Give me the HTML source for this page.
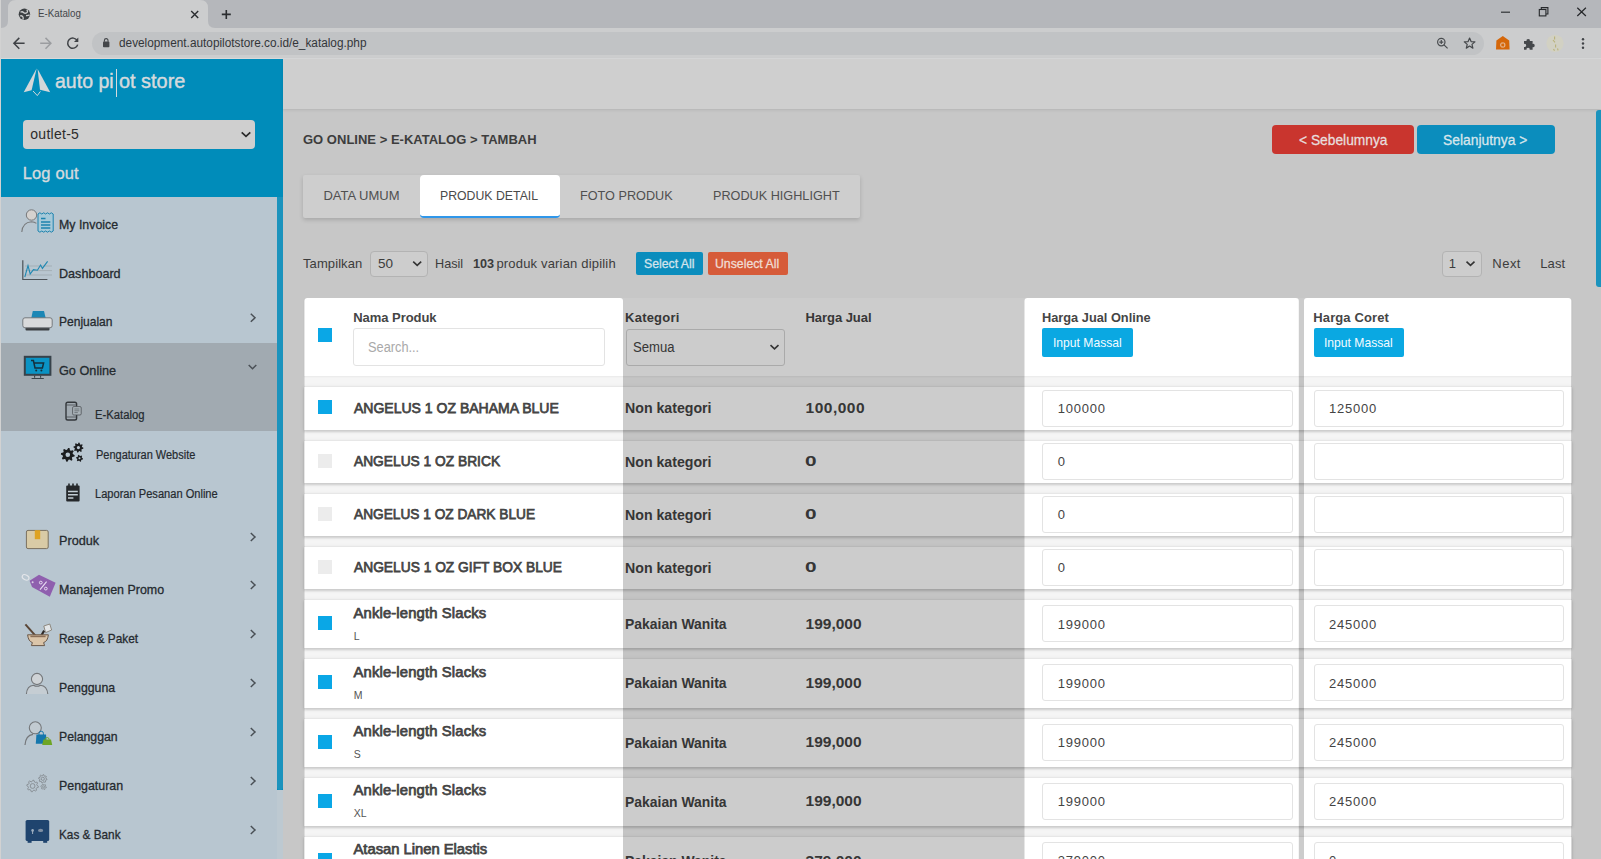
<!DOCTYPE html>
<html lang="id">
<head>
<meta charset="utf-8">
<title>E-Katalog</title>
<style>
*{box-sizing:border-box;margin:0;padding:0}
html,body{width:1601px;height:859px;overflow:hidden}
body{position:relative;background:#c7c7c7;font-family:"Liberation Sans",sans-serif;color:#333}
.abs{position:absolute}
.t{position:absolute;white-space:nowrap;line-height:1;transform-origin:0 50%}
svg{position:absolute;overflow:visible}
.row{position:absolute;left:304px;width:1268px;background:#fff;border-top:1px solid #e7e7e7;box-shadow:0 2px 2px rgba(0,0,0,.12),0 1px 4px rgba(0,0,0,.09)}
.inp{position:absolute;background:#fff;border:1px solid #e3e3e3;border-radius:3px}
.cb{position:absolute;width:14px;height:14px}
</style>
</head>
<body>
<div class="abs" style="left:0px;top:0px;width:1601px;height:28px;background:#b5b7bb;"></div>
<svg style="left:0;top:0" width="230" height="28" viewBox="0 0 230 28"><path d="M1 28 Q8 28 8 21 V8 Q8 0 16 0 H200 Q208 0 208 8 V21 Q208 28 215 28 Z" fill="#cccdce"/></svg>
<div class="abs" style="left:0px;top:28px;width:1601px;height:30px;background:#cccdce;"></div>
<div class="abs" style="left:0px;top:58px;width:1601px;height:1px;background:#d8d9da;"></div>
<div class="abs" style="left:92px;top:32px;width:1392px;height:23px;background:#c1c3c5;border-radius:12px;"></div>
<div class="t" style="left:37.5px;top:7.8px;font-size:11.5px;color:#43464a;transform:scaleX(0.849);">E-Katalog</div>
<div class="t" style="left:118.9px;top:37.1px;font-size:12px;color:#33363a;transform:scaleX(0.984);">development.autopilotstore.co.id/e_katalog.php</div>
<div class="abs" style="left:1px;top:59px;width:282px;height:800px;background:#008cba;"></div>
<div class="abs" style="left:1px;top:197px;width:276px;height:662px;background:#b8c6d0;"></div>
<div class="abs" style="left:1px;top:343px;width:276px;height:88px;background:#a1aab1;"></div>
<div class="abs" style="left:277px;top:790px;width:6px;height:69px;background:#bdc9d1;"></div>
<div class="abs" style="left:277px;top:197px;width:6px;height:593px;background:#1b93bd;border-radius:0 0 3px 3px;"></div>
<div class="abs" style="left:23px;top:120px;width:232px;height:29px;background:#cfcfcf;border-radius:4px;"></div>
<div class="t" style="left:54.8px;top:70.4px;font-size:21px;color:#d5dadd;transform:scaleX(0.930);-webkit-text-stroke:0.45px #d5dadd;">auto pi</div>
<div class="abs" style="left:115.7px;top:68.6px;width:1.7px;height:28.6px;background:#d5dadd;"></div>
<div class="t" style="left:119.4px;top:70.4px;font-size:21px;color:#d5dadd;transform:scaleX(0.947);-webkit-text-stroke:0.45px #d5dadd;">ot store</div>
<div class="t" style="left:30.3px;top:126.5px;font-size:14px;color:#2c2c2c;letter-spacing:0.27px;">outlet-5</div>
<div class="t" style="left:22.7px;top:164.9px;font-size:16.5px;color:#d5dadd;letter-spacing:0.16px;-webkit-text-stroke:0.35px #d5dadd;">Log out</div>
<div class="t" style="left:59.4px;top:218.0px;font-size:13px;color:#252a2f;transform:scaleX(0.951);-webkit-text-stroke:0.3px #252a2f;">My Invoice</div>
<div class="t" style="left:59.4px;top:266.5px;font-size:13px;color:#252a2f;transform:scaleX(0.969);-webkit-text-stroke:0.3px #252a2f;">Dashboard</div>
<div class="t" style="left:59.4px;top:315.2px;font-size:13px;color:#252a2f;transform:scaleX(0.925);-webkit-text-stroke:0.3px #252a2f;">Penjualan</div>
<div class="t" style="left:59.4px;top:364.2px;font-size:13px;color:#252a2f;transform:scaleX(0.976);-webkit-text-stroke:0.3px #252a2f;">Go Online</div>
<div class="t" style="left:59.4px;top:534.3px;font-size:13px;color:#252a2f;transform:scaleX(0.974);-webkit-text-stroke:0.3px #252a2f;">Produk</div>
<div class="t" style="left:59.4px;top:582.7px;font-size:13px;color:#252a2f;transform:scaleX(0.957);-webkit-text-stroke:0.3px #252a2f;">Manajemen Promo</div>
<div class="t" style="left:59.4px;top:632.3px;font-size:13px;color:#252a2f;transform:scaleX(0.912);-webkit-text-stroke:0.3px #252a2f;">Resep &amp; Paket</div>
<div class="t" style="left:59.4px;top:681.3px;font-size:13px;color:#252a2f;transform:scaleX(0.946);-webkit-text-stroke:0.3px #252a2f;">Pengguna</div>
<div class="t" style="left:59.4px;top:730.2px;font-size:13px;color:#252a2f;transform:scaleX(0.943);-webkit-text-stroke:0.3px #252a2f;">Pelanggan</div>
<div class="t" style="left:59.4px;top:779.0px;font-size:13px;color:#252a2f;transform:scaleX(0.954);-webkit-text-stroke:0.3px #252a2f;">Pengaturan</div>
<div class="t" style="left:59.4px;top:828.0px;font-size:13px;color:#252a2f;transform:scaleX(0.906);-webkit-text-stroke:0.3px #252a2f;">Kas &amp; Bank</div>
<div class="t" style="left:95.4px;top:408.5px;font-size:12px;color:#252a2f;transform:scaleX(0.940);-webkit-text-stroke:0.2px #252a2f;">E-Katalog</div>
<div class="t" style="left:95.5px;top:448.8px;font-size:12px;color:#252a2f;transform:scaleX(0.915);-webkit-text-stroke:0.2px #252a2f;">Pengaturan Website</div>
<div class="t" style="left:95.4px;top:488.1px;font-size:12px;color:#252a2f;transform:scaleX(0.924);-webkit-text-stroke:0.2px #252a2f;">Laporan Pesanan Online</div>
<div class="abs" style="left:283px;top:59px;width:1318px;height:50px;background:#cfcfcf;box-shadow:0 1px 3px rgba(0,0,0,.10);"></div>
<div class="abs" style="left:1596px;top:110px;width:5px;height:177px;background:#1b93bd;border-radius:3px 0 0 3px;"></div>
<div class="t" style="left:303.0px;top:133.0px;font-size:13px;color:#3d3d3d;font-weight:bold;letter-spacing:0.01px;">GO ONLINE &gt; E-KATALOG &gt; TAMBAH</div>
<div class="abs" style="left:303px;top:175px;width:557px;height:43px;background:#cecece;border-radius:2px;box-shadow:0 2px 4px rgba(0,0,0,.16);"></div>
<div class="abs" style="left:420px;top:175px;width:140px;height:43px;background:#fff;border-radius:4px;border-bottom:2px solid #2f97ea;"></div>
<div class="t" style="left:323.4px;top:189.0px;font-size:13px;color:#505050;letter-spacing:0.01px;">DATA UMUM</div>
<div class="t" style="left:440.4px;top:189.0px;font-size:13px;color:#4a4a4a;transform:scaleX(0.945);">PRODUK DETAIL</div>
<div class="t" style="left:579.9px;top:189.0px;font-size:13px;color:#505050;transform:scaleX(0.974);">FOTO PRODUK</div>
<div class="t" style="left:712.9px;top:189.0px;font-size:13px;color:#505050;transform:scaleX(0.974);">PRODUK HIGHLIGHT</div>
<div class="abs" style="left:1272px;top:125px;width:142px;height:29px;background:#c9352e;border-radius:4px;"></div>
<div class="abs" style="left:1417px;top:125px;width:138px;height:29px;background:#0b8dbd;border-radius:4px;"></div>
<div class="t" style="left:1298.7px;top:132.2px;font-size:15px;color:#e8dedd;transform:scaleX(0.919);-webkit-text-stroke:0.3px #e8dedd;">&lt; Sebelumnya</div>
<div class="t" style="left:1443.3px;top:132.2px;font-size:15px;color:#d8e6ec;transform:scaleX(0.923);-webkit-text-stroke:0.3px #d8e6ec;">Selanjutnya &gt;</div>
<div class="t" style="left:303.0px;top:256.8px;font-size:13px;color:#3c3c3c;letter-spacing:0.09px;">Tampilkan</div>
<div class="abs" style="left:370px;top:251px;width:58px;height:25.5px;background:#cdcdcd;border:1px solid #b3b3b3;border-radius:4px;"></div>
<div class="t" style="left:378.1px;top:256.9px;font-size:13.5px;color:#3c3c3c;">50</div>
<div class="t" style="left:435.4px;top:256.8px;font-size:13px;color:#3c3c3c;transform:scaleX(0.974);">Hasil</div>
<div class="t" style="left:473.4px;top:256.8px;font-size:13px;color:#3c3c3c;font-weight:bold;transform:scaleX(0.975);">103</div>
<div class="t" style="left:496.4px;top:256.8px;font-size:13px;color:#3c3c3c;letter-spacing:0.18px;">produk varian dipilih</div>
<div class="abs" style="left:636px;top:252px;width:67px;height:23px;background:#0b8dbd;border-radius:2px;"></div>
<div class="t" style="left:644.0px;top:257.5px;font-size:12.5px;color:#d3e4ec;transform:scaleX(0.982);-webkit-text-stroke:0.3px #d3e4ec;">Select All</div>
<div class="abs" style="left:708px;top:252px;width:80px;height:23px;background:#d65b39;border-radius:2px;"></div>
<div class="t" style="left:715.4px;top:257.5px;font-size:12.5px;color:#f0dcd4;transform:scaleX(0.982);-webkit-text-stroke:0.3px #f0dcd4;">Unselect All</div>
<div class="abs" style="left:1441.5px;top:250.5px;width:40px;height:26.5px;background:#cdcdcd;border:1px solid #b3b3b3;border-radius:4px;"></div>
<div class="t" style="left:1448.8px;top:257.3px;font-size:13px;color:#3c3c3c;">1</div>
<div class="t" style="left:1492.3px;top:257.3px;font-size:13px;color:#3c3c3c;letter-spacing:0.48px;">Next</div>
<div class="t" style="left:1540.3px;top:257.3px;font-size:13px;color:#3c3c3c;letter-spacing:0.07px;">Last</div>
<div class="abs" style="left:283px;top:288px;width:1313px;height:571px;background:#f9f9f9;"></div>
<div class="abs" style="left:304px;top:376px;width:1268px;height:483px;background:#f5f5f5;"></div>
<div class="abs" style="left:304px;top:298px;width:1268px;height:78px;background:#fff;border-radius:3px 3px 0 0;box-shadow:0 1px 2px rgba(0,0,0,.05)"></div>
<div class="abs" style="left:318px;top:327.6px;width:14px;height:14px;background:#0aa7e6;"></div>
<div class="t" style="left:353.2px;top:311.4px;font-size:13px;color:#454545;font-weight:bold;letter-spacing:-0.04px;">Nama Produk</div>
<div class="inp" style="left:353px;top:328px;width:251.5px;height:38px"></div>
<div class="t" style="left:368.4px;top:339.9px;font-size:14px;color:#a9a9a9;transform:scaleX(0.913);">Search...</div>
<div class="t" style="left:625.1px;top:311.4px;font-size:13px;color:#454545;font-weight:bold;letter-spacing:0.21px;">Kategori</div>
<div class="inp" style="left:625.5px;top:328.5px;width:159.5px;height:37px;border-color:#d5d5d5"></div>
<div class="t" style="left:632.9px;top:339.9px;font-size:14px;color:#444;transform:scaleX(0.937);">Semua</div>
<div class="t" style="left:805.4px;top:311.4px;font-size:13px;color:#454545;font-weight:bold;letter-spacing:-0.03px;">Harga Jual</div>
<div class="t" style="left:1041.9px;top:311.4px;font-size:13px;color:#454545;font-weight:bold;transform:scaleX(0.983);">Harga Jual Online</div>
<div class="abs" style="left:1042px;top:328px;width:90.5px;height:29.4px;background:#0aa8e2;border-radius:2px;"></div>
<div class="t" style="left:1052.7px;top:336.0px;font-size:13px;color:#f4fbff;transform:scaleX(0.933);">Input Massal</div>
<div class="t" style="left:1313.3px;top:311.4px;font-size:13px;color:#454545;font-weight:bold;letter-spacing:0.11px;">Harga Coret</div>
<div class="abs" style="left:1313.7px;top:328px;width:90.5px;height:29.4px;background:#0aa8e2;border-radius:2px;"></div>
<div class="t" style="left:1324.4px;top:336.0px;font-size:13px;color:#f4fbff;transform:scaleX(0.933);">Input Massal</div>
<div class="row" style="top:386.4px;height:43.2px"></div>
<div class="abs" style="left:318px;top:400.4px;width:14px;height:14px;background:#0aa7e6;"></div>
<div class="t" style="left:353.5px;top:400.5px;font-size:14.8px;color:#444;transform:scaleX(0.947);-webkit-text-stroke:0.75px #444;">ANGELUS 1 OZ BAHAMA BLUE</div>
<div class="t" style="left:625.0px;top:400.3px;font-size:15px;color:#444;font-weight:bold;transform:scaleX(0.944);">Non kategori</div>
<div class="t" style="left:805.5px;top:399.9px;font-size:15.5px;color:#444;font-weight:bold;letter-spacing:0.51px;">100,000</div>
<div class="inp" style="left:1042.3px;top:390px;width:250.5px;height:37px"></div>
<div class="inp" style="left:1313.7px;top:390px;width:250.5px;height:37px"></div>
<div class="t" style="left:1057.8px;top:401.7px;font-size:13px;color:#444;letter-spacing:0.75px;">100000</div>
<div class="t" style="left:1329.0px;top:401.7px;font-size:13px;color:#444;letter-spacing:0.75px;">125000</div>
<div class="row" style="top:439.6px;height:43.2px"></div>
<div class="abs" style="left:318px;top:453.6px;width:14px;height:14px;background:#ececec;"></div>
<div class="t" style="left:353.5px;top:453.7px;font-size:14.8px;color:#444;transform:scaleX(0.930);-webkit-text-stroke:0.75px #444;">ANGELUS 1 OZ BRICK</div>
<div class="t" style="left:625.0px;top:453.5px;font-size:15px;color:#444;font-weight:bold;transform:scaleX(0.944);">Non kategori</div>
<div class="t" style="left:805.3px;top:453.1px;font-size:15.5px;color:#444;font-weight:bold;transform:scaleX(1.342);">0</div>
<div class="inp" style="left:1042.3px;top:443px;width:250.5px;height:37px"></div>
<div class="inp" style="left:1313.7px;top:443px;width:250.5px;height:37px"></div>
<div class="t" style="left:1057.8px;top:454.9px;font-size:13px;color:#444;letter-spacing:0.75px;">0</div>
<div class="row" style="top:492.8px;height:43.2px"></div>
<div class="abs" style="left:318px;top:506.8px;width:14px;height:14px;background:#ececec;"></div>
<div class="t" style="left:353.5px;top:506.9px;font-size:14.8px;color:#444;transform:scaleX(0.925);-webkit-text-stroke:0.75px #444;">ANGELUS 1 OZ DARK BLUE</div>
<div class="t" style="left:625.0px;top:506.7px;font-size:15px;color:#444;font-weight:bold;transform:scaleX(0.944);">Non kategori</div>
<div class="t" style="left:805.3px;top:506.3px;font-size:15.5px;color:#444;font-weight:bold;transform:scaleX(1.342);">0</div>
<div class="inp" style="left:1042.3px;top:496px;width:250.5px;height:37px"></div>
<div class="inp" style="left:1313.7px;top:496px;width:250.5px;height:37px"></div>
<div class="t" style="left:1057.8px;top:508.1px;font-size:13px;color:#444;letter-spacing:0.75px;">0</div>
<div class="row" style="top:545.9px;height:43.2px"></div>
<div class="abs" style="left:318px;top:559.9px;width:14px;height:14px;background:#ececec;"></div>
<div class="t" style="left:353.5px;top:560.0px;font-size:14.8px;color:#444;transform:scaleX(0.931);-webkit-text-stroke:0.75px #444;">ANGELUS 1 OZ GIFT BOX BLUE</div>
<div class="t" style="left:625.0px;top:559.8px;font-size:15px;color:#444;font-weight:bold;transform:scaleX(0.944);">Non kategori</div>
<div class="t" style="left:805.3px;top:559.4px;font-size:15.5px;color:#444;font-weight:bold;transform:scaleX(1.342);">0</div>
<div class="inp" style="left:1042.3px;top:549px;width:250.5px;height:37px"></div>
<div class="inp" style="left:1313.7px;top:549px;width:250.5px;height:37px"></div>
<div class="t" style="left:1057.8px;top:561.2px;font-size:13px;color:#444;letter-spacing:0.75px;">0</div>
<div class="row" style="top:599.2px;height:49.2px"></div>
<div class="abs" style="left:318px;top:616.1px;width:14px;height:14px;background:#0aa7e6;"></div>
<div class="t" style="left:353.5px;top:605.6px;font-size:14.8px;color:#444;letter-spacing:0.15px;-webkit-text-stroke:0.75px #444;">Ankle-length Slacks</div>
<div class="t" style="left:353.8px;top:630.8px;font-size:10.5px;color:#555;">L</div>
<div class="t" style="left:625.0px;top:616.2px;font-size:15px;color:#444;font-weight:bold;transform:scaleX(0.928);">Pakaian Wanita</div>
<div class="t" style="left:805.5px;top:615.8px;font-size:15.5px;color:#444;font-weight:bold;letter-spacing:0.01px;">199,000</div>
<div class="inp" style="left:1042.3px;top:605px;width:250.5px;height:37px"></div>
<div class="inp" style="left:1313.7px;top:605px;width:250.5px;height:37px"></div>
<div class="t" style="left:1057.8px;top:617.5px;font-size:13px;color:#444;letter-spacing:0.75px;">199000</div>
<div class="t" style="left:1329.0px;top:617.5px;font-size:13px;color:#444;letter-spacing:0.75px;">245000</div>
<div class="row" style="top:658.4px;height:49.2px"></div>
<div class="abs" style="left:318px;top:675.3px;width:14px;height:14px;background:#0aa7e6;"></div>
<div class="t" style="left:353.5px;top:664.8px;font-size:14.8px;color:#444;letter-spacing:0.15px;-webkit-text-stroke:0.75px #444;">Ankle-length Slacks</div>
<div class="t" style="left:353.8px;top:690.0px;font-size:10.5px;color:#555;">M</div>
<div class="t" style="left:625.0px;top:675.4px;font-size:15px;color:#444;font-weight:bold;transform:scaleX(0.928);">Pakaian Wanita</div>
<div class="t" style="left:805.5px;top:675.0px;font-size:15.5px;color:#444;font-weight:bold;letter-spacing:0.01px;">199,000</div>
<div class="inp" style="left:1042.3px;top:664px;width:250.5px;height:37px"></div>
<div class="inp" style="left:1313.7px;top:664px;width:250.5px;height:37px"></div>
<div class="t" style="left:1057.8px;top:676.7px;font-size:13px;color:#444;letter-spacing:0.75px;">199000</div>
<div class="t" style="left:1329.0px;top:676.7px;font-size:13px;color:#444;letter-spacing:0.75px;">245000</div>
<div class="row" style="top:717.6px;height:49.2px"></div>
<div class="abs" style="left:318px;top:734.5px;width:14px;height:14px;background:#0aa7e6;"></div>
<div class="t" style="left:353.5px;top:724.0px;font-size:14.8px;color:#444;letter-spacing:0.15px;-webkit-text-stroke:0.75px #444;">Ankle-length Slacks</div>
<div class="t" style="left:353.8px;top:749.2px;font-size:10.5px;color:#555;">S</div>
<div class="t" style="left:625.0px;top:734.6px;font-size:15px;color:#444;font-weight:bold;transform:scaleX(0.928);">Pakaian Wanita</div>
<div class="t" style="left:805.5px;top:734.2px;font-size:15.5px;color:#444;font-weight:bold;letter-spacing:0.01px;">199,000</div>
<div class="inp" style="left:1042.3px;top:724px;width:250.5px;height:37px"></div>
<div class="inp" style="left:1313.7px;top:724px;width:250.5px;height:37px"></div>
<div class="t" style="left:1057.8px;top:735.9px;font-size:13px;color:#444;letter-spacing:0.75px;">199000</div>
<div class="t" style="left:1329.0px;top:735.9px;font-size:13px;color:#444;letter-spacing:0.75px;">245000</div>
<div class="row" style="top:776.8px;height:49.2px"></div>
<div class="abs" style="left:318px;top:793.7px;width:14px;height:14px;background:#0aa7e6;"></div>
<div class="t" style="left:353.5px;top:783.2px;font-size:14.8px;color:#444;letter-spacing:0.15px;-webkit-text-stroke:0.75px #444;">Ankle-length Slacks</div>
<div class="t" style="left:353.8px;top:808.4px;font-size:10.5px;color:#555;">XL</div>
<div class="t" style="left:625.0px;top:793.8px;font-size:15px;color:#444;font-weight:bold;transform:scaleX(0.928);">Pakaian Wanita</div>
<div class="t" style="left:805.5px;top:793.4px;font-size:15.5px;color:#444;font-weight:bold;letter-spacing:0.01px;">199,000</div>
<div class="inp" style="left:1042.3px;top:783px;width:250.5px;height:37px"></div>
<div class="inp" style="left:1313.7px;top:783px;width:250.5px;height:37px"></div>
<div class="t" style="left:1057.8px;top:795.1px;font-size:13px;color:#444;letter-spacing:0.75px;">199000</div>
<div class="t" style="left:1329.0px;top:795.1px;font-size:13px;color:#444;letter-spacing:0.75px;">245000</div>
<div class="row" style="top:836px;height:49.2px"></div>
<div class="abs" style="left:318px;top:852.9px;width:14px;height:14px;background:#0aa7e6;"></div>
<div class="t" style="left:353.5px;top:842.4px;font-size:14.8px;color:#444;letter-spacing:-0.02px;-webkit-text-stroke:0.75px #444;">Atasan Linen Elastis</div>
<div class="t" style="left:353.8px;top:867.6px;font-size:10.5px;color:#555;">L</div>
<div class="t" style="left:625.0px;top:853.0px;font-size:15px;color:#444;font-weight:bold;transform:scaleX(0.928);">Pakaian Wanita</div>
<div class="t" style="left:805.5px;top:852.6px;font-size:15.5px;color:#444;font-weight:bold;letter-spacing:0.01px;">379,000</div>
<div class="inp" style="left:1042.3px;top:842px;width:250.5px;height:37px"></div>
<div class="inp" style="left:1313.7px;top:842px;width:250.5px;height:37px"></div>
<div class="t" style="left:1057.8px;top:854.3px;font-size:13px;color:#444;letter-spacing:0.75px;">379000</div>
<div class="t" style="left:1329.0px;top:854.3px;font-size:13px;color:#444;letter-spacing:0.75px;">0</div>
<svg style="left:0;top:0" width="1601" height="859" viewBox="0 0 1601 859"><path fill="#000" fill-opacity="0.2" fill-rule="evenodd" d="M283 288 H1596 V859 H283 Z M304.5 859 L304.5 301 Q304.5 298 307.5 298 L620 298 Q623 298 623 301 L623 859 Z M1024.5 859 L1024.5 301 Q1024.5 298 1027.5 298 L1295.8 298 Q1298.8 298 1298.8 301 L1298.8 859 Z M1304 859 L1304 301 Q1304 298 1307 298 L1568.2 298 Q1571.2 298 1571.2 301 L1571.2 859 Z"/></svg>
<svg style="left:0;top:0" width="1601" height="859" viewBox="0 0 1601 859">
<circle cx="24.4" cy="14.3" r="5.7" fill="#3c4043"/>
<path d="M20.5 12.2 q2 -1.2 3.2 .6 q1.6 1 3.3 -.3 q1.2 -1.6 -.4 -2.6 M20 16 q2 -.8 3 1 q.6 1.6 -.3 2.6 M26 15.5 q2 .2 3.6 -.6" fill="none" stroke="#cccdce" stroke-width="1.3"/>
<path d="M191.2 11 l7 7 M198.2 11 l-7 7" stroke="#2b2d30" stroke-width="1.4" fill="none"/>
<path d="M221.8 14.4 h9 M226.3 9.9 v9" stroke="#2b2d30" stroke-width="1.6" fill="none"/>
<path d="M24.6 43.3 H14 M19.3 37.9 L13.9 43.3 L19.3 48.7" stroke="#3f4246" stroke-width="1.5" fill="none"/>
<path d="M40.2 43.3 H50.8 M45.5 37.9 L50.9 43.3 L45.5 48.7" stroke="#9b9da0" stroke-width="1.5" fill="none"/>
<path d="M77.2 40.6 A5.1 5.1 0 1 0 77.7 44.6" stroke="#3f4246" stroke-width="1.5" fill="none"/>
<path d="M78.3 37.6 v4.3 h-4.3 Z" fill="#3f4246"/>
<rect x="103" y="41.6" width="6.4" height="5.6" rx=".8" fill="#44474a"/>
<path d="M104.4 41.8 v-1.4 a1.8 1.8 0 0 1 3.6 0 v1.4" stroke="#44474a" stroke-width="1.1" fill="none"/>
<circle cx="1441.3" cy="42.1" r="3.7" stroke="#4a4d50" stroke-width="1.2" fill="none"/>
<path d="M1444 44.9 l3.6 3.5 M1439.3 42.1 h4 M1441.3 40.1 v4" stroke="#4a4d50" stroke-width="1.2" fill="none"/>
<path d="M1469.60 38.00 L1471.07 41.58 L1474.93 41.87 L1471.98 44.37 L1472.89 48.13 L1469.60 46.10 L1466.31 48.13 L1467.22 44.37 L1464.27 41.87 L1468.13 41.58 Z" stroke="#45484b" stroke-width="1.2" fill="none" stroke-linejoin="round"/>
<path d="M1496.4 40.4 L1502.8 36 L1509.2 40.4 L1509.6 49.6 H1496 Z" fill="#d5670a"/>
<rect x="1500.8" y="43" width="4" height="4" rx="1" fill="none" stroke="#e8c8ae" stroke-width="1"/>
<path d="M1524 41 h2.6 a1.7 1.7 0 1 1 3.3 0 h2.7 v2.9 a1.7 1.7 0 1 1 0 3.3 v2.6 h-3 a1.6 1.6 0 1 0 -3 0 h-2.6 v-2.9 a1.6 1.6 0 1 0 0 -3 Z" fill="#45484b"/>
<circle cx="1555" cy="43.3" r="8.6" fill="#d2d1c3"/>
<path d="M1554.6 36.5 v3 M1553 40 l2 2.4 M1555.6 44.5 v3 M1553.5 49 l1 1.6 M1557.5 48.5 l.6 1.8" stroke="#b9b27a" stroke-width="1.1" fill="none"/>
<circle cx="1583" cy="39.3" r="1.2" fill="#3f4246"/>
<circle cx="1583" cy="43.5" r="1.2" fill="#3f4246"/>
<circle cx="1583" cy="47.7" r="1.2" fill="#3f4246"/>
<path d="M1501 12.2 h9" stroke="#303236" stroke-width="1.2"/>
<rect x="1539.3" y="9.5" width="6.6" height="6.4" fill="none" stroke="#26282b" stroke-width="1.1"/>
<path d="M1541.3 9.3 v-1.7 h6.6 v6.4 h-1.9" fill="none" stroke="#26282b" stroke-width="1.1"/>
<path d="M1577.3 7.8 l8.6 8.2 M1585.9 7.8 l-8.6 8.2" stroke="#26282b" stroke-width="1.2" fill="none"/>
<path d="M36.7 68.2 L23.7 92.2 L31.6 90.2 Z" fill="#d3d7d9"/>
<path d="M37.6 69 L40 89.8 L50.2 92.2 Z" fill="#d3d7d9"/>
<path d="M33 91 L37.3 95.6 L40.4 91.4" fill="none" stroke="#d3d7d9" stroke-width="1"/>
<path d="M241.7 132.3 l4.3 4 l4.3 -4" fill="none" stroke="#2a2a2a" stroke-width="1.7"/>
<path d="M413.2 261.7 l4 3.7 l4 -3.7" fill="none" stroke="#333" stroke-width="1.6"/>
<path d="M1466.5 261.7 l4 3.7 l4 -3.7" fill="none" stroke="#333" stroke-width="1.6"/>
<path d="M770.5 345.2 l4 3.7 l4 -3.7" fill="none" stroke="#333" stroke-width="1.6"/>
<path d="M250.8 313.8 l4.2 4 l-4.2 4" fill="none" stroke="#4a5056" stroke-width="1.5"/>
<path d="M250.8 533 l4.2 4 l-4.2 4" fill="none" stroke="#4a5056" stroke-width="1.5"/>
<path d="M250.8 581 l4.2 4 l-4.2 4" fill="none" stroke="#4a5056" stroke-width="1.5"/>
<path d="M250.8 630 l4.2 4 l-4.2 4" fill="none" stroke="#4a5056" stroke-width="1.5"/>
<path d="M250.8 679 l4.2 4 l-4.2 4" fill="none" stroke="#4a5056" stroke-width="1.5"/>
<path d="M250.8 728 l4.2 4 l-4.2 4" fill="none" stroke="#4a5056" stroke-width="1.5"/>
<path d="M250.8 777 l4.2 4 l-4.2 4" fill="none" stroke="#4a5056" stroke-width="1.5"/>
<path d="M250.8 826 l4.2 4 l-4.2 4" fill="none" stroke="#4a5056" stroke-width="1.5"/>
<path d="M248.7 365 l3.8 3.7 l3.8 -3.7" fill="none" stroke="#4a5056" stroke-width="1.5"/>
<circle cx="31.5" cy="215" r="5.2" fill="#d5d2cf" stroke="#77797b" stroke-width="1"/>
<path d="M21.8 232 q.8 -9.5 9.6 -10.2 q3.2 .2 5 1.6" fill="none" stroke="#77797b" stroke-width="1.1"/>
<path d="M38 214 l1.9 -1.2 l1.9 1.2 l1.9 -1.2 l1.9 1.2 l1.9 -1.2 l1.9 1.2 l1.9 -1.2 l1.9 1.2 v17 l-1.9 1.2 l-1.9 -1.2 l-1.9 1.2 l-1.9 -1.2 l-1.9 1.2 l-1.9 -1.2 l-1.9 1.2 l-1.9 -1.2 Z" fill="#a5c9d9" stroke="#1c83ae" stroke-width="1"/>
<path d="M41 218.5 h4.5 M41 222 h9.3 M41 225 h9.3 M41 228 h9.3" stroke="#1c83ae" stroke-width="1.3"/>
<path d="M25 266 h27 M25 270.6 h27 M25 275 h27" stroke="#9fa9b0" stroke-width=".8"/>
<path d="M22.8 260.3 V279.5 H47.4" fill="none" stroke="#4d5358" stroke-width="1.2"/>
<path d="M24.8 277 L28 265.5 L30.2 274 L33.4 269.6 L37.4 270.2 L40.6 265 L42.4 268.4 L47.6 261.4" fill="none" stroke="#1f88b2" stroke-width="1.1"/>
<path d="M31.2 318.5 L32.8 311 H44 L45.8 318.5 Z" fill="#1c87b5"/>
<rect x="25.5" y="326.5" width="24" height="4" rx="1" fill="#3c3f42"/>
<rect x="22.8" y="317.8" width="29.4" height="10" rx="2.2" fill="#d9dadb" stroke="#6d7074" stroke-width=".9"/>
<rect x="24.8" y="356.8" width="25.6" height="18" fill="#0a93c4" stroke="#37424a" stroke-width="2"/>
<path d="M34.6 375.6 v2.2 M40.6 375.6 v2.2 M31.6 378.5 h12.2" stroke="#3a444a" stroke-width="1.1" fill="none"/>
<path d="M31 360.5 h2.4 l1.6 7.4 h7.4 l1.2 -5 h-9.4" fill="none" stroke="#15303c" stroke-width="1.5"/>
<circle cx="36.2" cy="370.4" r="1" fill="#15303c"/><circle cx="41.4" cy="370.4" r="1" fill="#15303c"/>
<rect x="66" y="402.2" width="10.6" height="17.8" rx="1.8" fill="none" stroke="#33373b" stroke-width="1.4"/>
<path d="M66 405 h10.6 M66 417 h10.6" stroke="#3b3f43" stroke-width=".7"/>
<rect x="72.6" y="406.6" width="8.6" height="8.4" rx="1.2" fill="#a9b2b8" stroke="#4c5156" stroke-width=".8"/>
<path d="M74.4 409 h5 M74.4 410.8 h5 M74.4 412.6 h3.4" stroke="#4c5156" stroke-width=".6"/>
<path d="M74.69 455.14 L74.49 456.48 L72.41 456.98 L71.90 457.84 L72.43 459.91 L71.35 460.72 L69.52 459.60 L68.55 459.84 L67.46 461.69 L66.12 461.49 L65.62 459.41 L64.76 458.90 L62.69 459.43 L61.88 458.35 L63.00 456.52 L62.76 455.55 L60.91 454.46 L61.11 453.12 L63.19 452.62 L63.70 451.76 L63.17 449.69 L64.25 448.88 L66.08 450.00 L67.05 449.76 L68.14 447.91 L69.48 448.11 L69.98 450.19 L70.84 450.70 L72.91 450.17 L73.72 451.25 L72.60 453.08 L72.84 454.05 Z M65.50 454.80 a2.30 2.30 0 1 0 4.60 0 a2.30 2.30 0 1 0 -4.60 0 Z" fill="#1b1d1f" fill-rule="evenodd"/>
<path d="M83.39 447.85 L83.25 448.81 L81.74 449.18 L81.37 449.80 L81.76 451.30 L80.97 451.89 L79.65 451.08 L78.94 451.26 L78.15 452.59 L77.19 452.45 L76.82 450.94 L76.20 450.57 L74.70 450.96 L74.11 450.17 L74.92 448.85 L74.74 448.14 L73.41 447.35 L73.55 446.39 L75.06 446.02 L75.43 445.40 L75.04 443.90 L75.83 443.31 L77.15 444.12 L77.86 443.94 L78.65 442.61 L79.61 442.75 L79.98 444.26 L80.60 444.63 L82.10 444.24 L82.69 445.03 L81.88 446.35 L82.06 447.06 Z M76.80 447.60 a1.60 1.60 0 1 0 3.20 0 a1.60 1.60 0 1 0 -3.20 0 Z" fill="#1b1d1f" fill-rule="evenodd"/>
<path d="M82.99 458.53 L82.81 459.43 L81.58 459.69 L81.15 460.18 L81.05 461.44 L80.18 461.73 L79.34 460.79 L78.70 460.67 L77.56 461.21 L76.87 460.61 L77.26 459.41 L77.05 458.79 L76.01 458.07 L76.19 457.17 L77.42 456.91 L77.85 456.42 L77.95 455.16 L78.82 454.87 L79.66 455.81 L80.30 455.93 L81.44 455.39 L82.13 455.99 L81.74 457.19 L81.95 457.81 Z M78.50 458.30 a1.00 1.00 0 1 0 2.00 0 a1.00 1.00 0 1 0 -2.00 0 Z" fill="#1b1d1f" fill-rule="evenodd"/>
<rect x="66.2" y="485.6" width="13.4" height="15.8" rx="1" fill="#25282b"/>
<path d="M69 483.4 v3.4 M73 483.4 v3.4 M77 483.4 v3.4" stroke="#25282b" stroke-width="1.6"/>
<path d="M68 491.6 h9.8 M68 494.8 h9.8 M68 498 h5.4" stroke="#c3cdd4" stroke-width="1.5"/>
<rect x="26.4" y="530.4" width="21.8" height="18.2" rx="1.6" fill="#d9cba6" stroke="#7a705e" stroke-width="1"/>
<rect x="34.8" y="530.2" width="5.4" height="9" fill="#dfa320"/>
<path d="M29.6 580.8 L39 574.8 L55.6 582.8 L49.8 596.8 L32 587 Z" fill="#8f5fae"/>
<ellipse cx="25.6" cy="577.4" rx="3.6" ry="2.4" fill="none" stroke="#e4e6ea" stroke-width="1.1" transform="rotate(28 25.6 577.4)"/>
<circle cx="32.6" cy="582.2" r="1" fill="#d9cbe6"/>
<path d="M40 589.6 L46.6 581.6" stroke="#e9def3" stroke-width="1.1"/>
<circle cx="40.8" cy="582.6" r="1.4" fill="none" stroke="#e9def3" stroke-width="1"/><circle cx="45.8" cy="588.6" r="1.4" fill="none" stroke="#e9def3" stroke-width="1"/>
<path d="M25.4 624.4 L37.6 638.2" stroke="#5a4535" stroke-width="2"/>
<path d="M40.4 637 L44.2 630.6" stroke="#2f2a28" stroke-width="2.2"/>
<path d="M43.8 626 L49.8 624 L51.6 630 L45.6 632.6 Z" fill="#e3e6e8" stroke="#7d7568" stroke-width=".8"/>
<path d="M27.6 634.8 H48.4 Q47.6 641.4 43.6 642.6 L44.6 645.6 H31.4 L32.4 642.6 Q28.4 641.4 27.6 634.8 Z" fill="#dbc5a9" stroke="#6b5848" stroke-width="1"/>
<path d="M30.4 636.4 H45.6" stroke="#8b6f58" stroke-width="1.6"/>
<circle cx="37" cy="679" r="5.6" fill="#cfd3d6" stroke="#74777a" stroke-width="1.1"/>
<path d="M26.4 694 Q27 685.6 33.6 685.2 Q37 687.4 40.4 685.2 Q47 685.6 47.8 694" fill="#c5cdd3" stroke="#74777a" stroke-width="1.1"/>
<circle cx="35.3" cy="727.8" r="6" fill="#c2cbd1" stroke="#74777a" stroke-width="1.1"/>
<path d="M25 745 Q25.6 735.4 33 734.4" fill="none" stroke="#74777a" stroke-width="1.2"/>
<path d="M36.4 734.6 h9.6 l.6 9.2 h-10.8 Z" fill="#1577ad"/>
<path d="M39 735 v-1.6 a2.2 2.2 0 0 1 4.4 0 v1.6" fill="none" stroke="#1577ad" stroke-width="1"/>
<path d="M43.4 739.4 h7.6 l1.2 5.6 h-10 Z" fill="#6ea524"/>
<path d="M45.2 739.6 a2 2 0 0 1 4 0" fill="none" stroke="#6ea524" stroke-width="1"/>
<path d="M38.39 786.28 L38.23 787.41 L36.58 787.88 L36.13 788.62 L36.50 790.30 L35.58 790.97 L34.08 790.14 L33.25 790.35 L32.32 791.79 L31.19 791.63 L30.72 789.98 L29.98 789.53 L28.30 789.90 L27.63 788.98 L28.46 787.48 L28.25 786.65 L26.81 785.72 L26.97 784.59 L28.62 784.12 L29.07 783.38 L28.70 781.70 L29.62 781.03 L31.12 781.86 L31.95 781.65 L32.88 780.21 L34.01 780.37 L34.48 782.02 L35.22 782.47 L36.90 782.10 L37.57 783.02 L36.74 784.52 L36.95 785.35 Z M30.20 786.00 a2.40 2.40 0 1 0 4.80 0 a2.40 2.40 0 1 0 -4.80 0 Z" fill="none" stroke="#848b91" stroke-width=".9"/>
<path d="M46.99 779.01 L46.87 779.82 L45.60 780.13 L45.29 780.65 L45.62 781.91 L44.96 782.40 L43.84 781.72 L43.25 781.87 L42.59 782.99 L41.78 782.87 L41.47 781.60 L40.95 781.29 L39.69 781.62 L39.20 780.96 L39.88 779.84 L39.73 779.25 L38.61 778.59 L38.73 777.78 L40.00 777.47 L40.31 776.95 L39.98 775.69 L40.64 775.20 L41.76 775.88 L42.35 775.73 L43.01 774.61 L43.82 774.73 L44.13 776.00 L44.65 776.31 L45.91 775.98 L46.40 776.64 L45.72 777.76 L45.87 778.35 Z M41.20 778.80 a1.60 1.60 0 1 0 3.20 0 a1.60 1.60 0 1 0 -3.20 0 Z" fill="none" stroke="#848b91" stroke-width=".9"/>
<path d="M46.39 786.98 L46.25 787.70 L45.26 787.91 L44.92 788.30 L44.84 789.31 L44.15 789.55 L43.47 788.80 L42.96 788.69 L42.04 789.13 L41.49 788.65 L41.81 787.68 L41.64 787.19 L40.81 786.62 L40.95 785.90 L41.94 785.69 L42.28 785.30 L42.36 784.29 L43.05 784.05 L43.73 784.80 L44.24 784.91 L45.16 784.47 L45.71 784.95 L45.39 785.92 L45.56 786.41 Z M42.60 786.80 a1.00 1.00 0 1 0 2.00 0 a1.00 1.00 0 1 0 -2.00 0 Z" fill="none" stroke="#848b91" stroke-width=".8"/>
<rect x="25.6" y="820" width="23.6" height="21" rx="1.6" fill="#1f446e"/>
<rect x="27.6" y="840.6" width="4" height="2.2" fill="#1f446e"/><rect x="43.2" y="840.6" width="4" height="2.2" fill="#1f446e"/>
<circle cx="32.6" cy="830.4" r="1.3" fill="#9fb0c2"/><path d="M32.6 831 v3" stroke="#9fb0c2" stroke-width="1"/>
<ellipse cx="40.6" cy="830.4" rx="2.6" ry="1.6" fill="#7d8ea3"/>
</svg>
<div class="abs" style="left:0;top:0;width:1px;height:859px;background:#d2d2d2"></div>
</body>
</html>
